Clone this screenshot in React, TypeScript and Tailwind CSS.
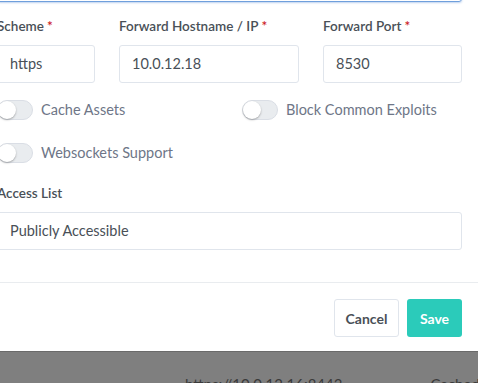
import { ReactNode } from 'react';

const font = { fontFamily: 'Lato, "Noto Sans", sans-serif' };

// ラベル（必須マーク付き）
const Label = ({ children, required }: { children: ReactNode; required?: boolean }) => (
  <label className="block h-[21px] mb-[8px] text-[13.5px] leading-[21px] font-semibold text-[#495057] whitespace-nowrap">
    {children}
    {required && <span className="ml-[3px] text-[#cd201f]">*</span>}
  </label>
);

const Input = ({ value }: { value: string }) => (
  <div className="h-[38px] border border-[#e0e5ec] rounded-[3px] bg-white pl-[12px] flex items-center text-[14.5px] text-[#495057]">
    {value}
  </div>
);

const Toggle = ({ label }: { label: string }) => (
  <div className="flex items-center h-[21px] gap-[8px]">
    <div className="relative w-[36px] h-[20px] rounded-full bg-[#e9ecef] border border-[#dadee5]">
      <div className="absolute left-0 top-0 w-[18px] h-[18px] rounded-full bg-white shadow-[0_1px_2px_rgba(0,0,0,0.3)]" />
    </div>
    <span className="text-[14.5px] text-[#6e7687]">{label}</span>
  </div>
);

export default function App() {
  return (
    <div className="w-[478px] h-[383px] overflow-hidden bg-[#7f7f7f]" style={font}>
      {/* モーダル本体 */}
      <div className="flow-root bg-white border-b border-[#6a6a6a]">
        <div className="ml-[-3px] w-[465px]">
          {/* 上の入力欄（フォーカス中）の下端 */}
          <div className="mt-[-36px] h-[38px] border border-[#6f9fdc] rounded-[3px] shadow-[0_1px_2px_rgba(70,127,207,0.35)]" />

          <div className="mt-[14px] grid grid-cols-[98px_180px_139px] gap-x-[24px]">
            <div>
              <Label required>Scheme</Label>
              <Input value="https" />
            </div>
            <div>
              <Label required>Forward Hostname / IP</Label>
              <Input value="10.0.12.18" />
            </div>
            <div>
              <Label required>Forward Port</Label>
              <Input value="8530" />
            </div>
          </div>

          <div className="mt-[16px] grid grid-cols-[245px_220px] gap-y-[22px]">
            <Toggle label="Cache Assets" />
            <Toggle label="Block Common Exploits" />
            <Toggle label="Websockets Support" />
          </div>

          <div className="mt-[20px]">
            <Label>Access List</Label>
            <Input value="Publicly Accessible" />
          </div>
        </div>

        {/* フッター */}
        <div className="mt-[32px] border-t border-[#e9ecef] pt-[16px] pb-[14px] flex justify-end gap-[8px] pr-[16px]">
          <button className="w-[65px] h-[38px] border border-[#e0e5ec] rounded-[3px] bg-white text-[14px] font-bold text-[#495057]">
            Cancel
          </button>
          <button className="w-[55px] h-[38px] rounded-[3px] bg-[#2bcbba] text-[14px] font-bold text-white">
            Save
          </button>
        </div>
      </div>

      {/* 背景のテーブル（オーバーレイ越し） */}
      <div className="flex pt-[21px] text-[15px] text-[#3a3a3a] whitespace-nowrap">
        <span className="ml-[185px]">https://10.0.12.16:8443</span>
        <span className="ml-[88px]">Cached</span>
      </div>
    </div>
  );
}
